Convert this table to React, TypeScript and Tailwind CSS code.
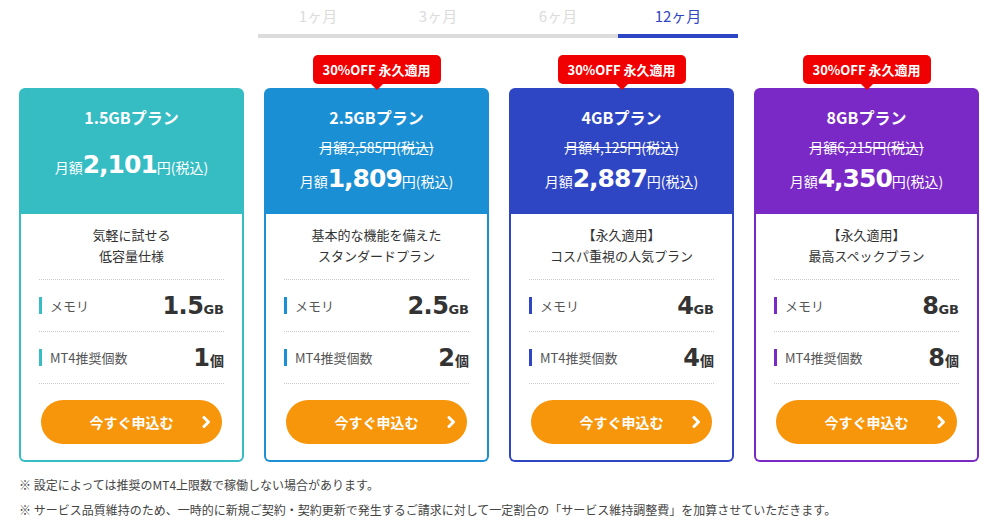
const plans = [
  {
    name: "1.5GBプラン",
    old: "",
    price: "2,101",
    desc: ["気軽に試せる", "低容量仕様"],
    mem: "1.5",
    mt4: "1",
    bg: "bg-[#36bcc3]",
    bar: "bg-[#36bcc3]",
  },
  {
    name: "2.5GBプラン",
    old: "月額2,585円(税込)",
    price: "1,809",
    desc: ["基本的な機能を備えた", "スタンダードプラン"],
    mem: "2.5",
    mt4: "2",
    bg: "bg-[#1b8fd3]",
    bar: "bg-[#1b8fd3]",
  },
  {
    name: "4GBプラン",
    old: "月額4,125円(税込)",
    price: "2,887",
    desc: ["【永久適用】", "コスパ重視の人気プラン"],
    mem: "4",
    mt4: "4",
    bg: "bg-[#2f46c4]",
    bar: "bg-[#2f46c4]",
  },
  {
    name: "8GBプラン",
    old: "月額6,215円(税込)",
    price: "4,350",
    desc: ["【永久適用】", "最高スペックプラン"],
    mem: "8",
    mt4: "8",
    bg: "bg-[#7a29c6]",
    bar: "bg-[#7a29c6]",
  },
];

const tabs = ["1ヶ月", "3ヶ月", "6ヶ月", "12ヶ月"];

function Chevron() {
  return (
    <svg width="9" height="12" viewBox="0 0 9 12" className="absolute right-[11px] top-[16px]">
      <polyline points="2,1.5 6.5,6 2,10.5" fill="none" stroke="white" strokeWidth="3" strokeLinecap="round" strokeLinejoin="round" />
    </svg>
  );
}

function Price({ value }: { value: string }) {
  return (
    <>
      <span className="text-[14px]">月額</span>
      <span className="font-['DejaVu_Sans'] font-bold text-[25px] tracking-[-1px]">{value}</span>
      <span className="text-[14px]">円(税込)</span>
    </>
  );
}

function Card({ p }: { p: (typeof plans)[number] }) {
  return (
    <div className={`relative w-[225px] rounded-[6px] ${p.bg} flex flex-col`}>
      {p.old && (
        <div className="absolute left-1/2 -translate-x-1/2 top-[-33px] w-[128px] h-[29px] rounded-[5px] bg-[#f00000] flex items-center justify-center text-white text-[13px] font-bold">
          30%OFF 永久適用
          <span className="absolute left-1/2 -translate-x-1/2 top-[29px] w-0 h-0 border-l-[6px] border-r-[6px] border-t-[6px] border-l-transparent border-r-transparent border-t-[#f00000]" />
        </div>
      )}
      <div className="h-[126px] flex flex-col items-center text-white">
        <div className="pt-[17px] h-[41px] text-[16px] leading-[24px] font-bold">{p.name}</div>
        {p.old ? (
          <>
            <div className="mt-[8px] h-[20px] leading-[20px] text-[14px] line-through">{p.old}</div>
            <div className="mt-[3px] h-[36px] flex items-baseline">
              <Price value={p.price} />
            </div>
          </>
        ) : (
          <div className="mt-[17px] h-[36px] flex items-baseline">
            <Price value={p.price} />
          </div>
        )}
      </div>
      <div className="mx-[2px] mb-[2px] rounded-b-[4px] bg-white px-[18px] pt-[10px] pb-[16px]">
        <div className="text-center text-[13px] leading-[21px] text-[#333]">
          <div>{p.desc[0]}</div>
          <div>{p.desc[1]}</div>
        </div>
        <div className="mt-[13px] border-t border-dotted border-[#c8c8c8]" />
        <div className="h-[51px] flex items-center">
          <span className={`w-[3px] h-[17px] ${p.bar}`} />
          <span className="ml-[8px] text-[13px] text-[#555]">メモリ</span>
          <span className="ml-auto flex items-baseline text-[#333] font-bold">
            <span className="font-['DejaVu_Sans'] text-[24px] tracking-[-0.5px]">{p.mem}</span>
            <span className="font-['DejaVu_Sans'] text-[13px]">GB</span>
          </span>
        </div>
        <div className="border-t border-dotted border-[#c8c8c8]" />
        <div className="h-[51px] flex items-center">
          <span className={`w-[3px] h-[17px] ${p.bar}`} />
          <span className="ml-[8px] text-[13px] text-[#555]">MT4推奨個数</span>
          <span className="ml-auto flex items-baseline text-[#333] font-bold">
            <span className="font-['DejaVu_Sans'] text-[24px]">{p.mt4}</span>
            <span className="text-[14px]">個</span>
          </span>
        </div>
        <div className="border-t border-dotted border-[#c8c8c8]" />
        <button className="relative mt-[16px] mx-[2px] w-[181px] h-[44px] rounded-full bg-[#f7950b] text-white text-[14px] font-bold flex items-center justify-center">
          今すぐ申込む
          <Chevron />
        </button>
      </div>
    </div>
  );
}

export default function App() {
  return (
    <div className="w-[996px] h-[521px] bg-white overflow-hidden font-['Noto_Sans_CJK_JP','Noto_Sans',sans-serif]">
      <div className="flex justify-center">
        <div className="flex w-[480px]">
          {tabs.map((t, i) => (
            <div
              key={t}
              className={
                i === 3
                  ? "w-[120px] h-[38px] pb-[2px] border-b-4 border-[#2f46c4] flex items-center justify-center text-[15px] text-[#2f46c4]"
                  : "w-[120px] h-[38px] pb-[2px] border-b-4 border-[#dcdcdc] flex items-center justify-center text-[15px] text-[#dcdcdc]"
              }
            >
              {t}
            </div>
          ))}
        </div>
      </div>
      <div className="mt-[50px] px-[19px] flex gap-[20px]">
        {plans.map((p) => (
          <Card key={p.name} p={p} />
        ))}
      </div>
      <div className="mt-[10px] px-[19px] text-[12px] leading-[25px] text-[#444]">
        <div>※ 設定によっては推奨のMT4上限数で稼働しない場合があります。</div>
        <div>※ サービス品質維持のため、一時的に新規ご契約・契約更新で発生するご請求に対して一定割合の「サービス維持調整費」を加算させていただきます。</div>
      </div>
    </div>
  );
}
